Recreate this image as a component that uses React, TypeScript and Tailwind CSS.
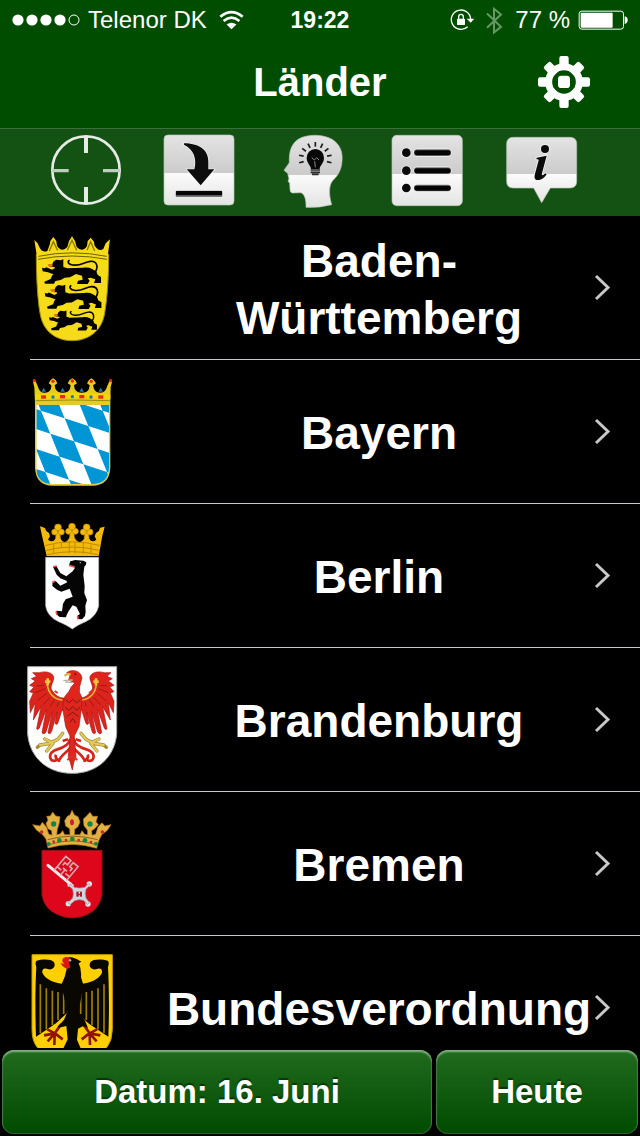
import type { ReactNode } from "react";

const font = "font-['Liberation_Sans',Arial,sans-serif]";

/* ---------- status bar ---------- */

function SignalDots() {
  return (
    <svg viewBox="0 0 68 12" className="h-3 w-[68px]" aria-hidden="true">
      <g fill="#fff">
        <circle cx="6" cy="6" r="5.6" />
        <circle cx="20" cy="6" r="5.6" />
        <circle cx="34" cy="6" r="5.6" />
        <circle cx="48" cy="6" r="5.6" />
      </g>
      <circle cx="62" cy="6" r="5" fill="none" stroke="#fff" strokeWidth="1" />
    </svg>
  );
}

function Wifi() {
  return (
    <svg viewBox="660 30 76 60" className="h-5 w-[25px]" aria-hidden="true">
      <g fill="none" stroke="#fff" strokeWidth="8">
        <path d="M664 50Q698 22 732 50" />
        <path d="M674 63Q698 43 722 63" />
      </g>
      <path d="M683 74Q698 63 713 74L698 88Z" fill="#fff" />
    </svg>
  );
}

function RotationLock() {
  return (
    <svg viewBox="390 28 75 66" className="h-[22px] w-[25px]" aria-hidden="true">
      <path d="M443 81A29 29 0 1 1 452 60" fill="none" stroke="#fff" strokeWidth="4" />
      <path d="M440 57H463L452 69Z" fill="#fff" />
      <rect x="411" y="57" width="24" height="19" rx="2" fill="#fff" />
      <path d="M416 58V51A7 7 0 0 1 430 51V58" fill="none" stroke="#fff" strokeWidth="4" />
    </svg>
  );
}

function Bluetooth() {
  return (
    <svg viewBox="494 18 54 86" className="h-[29px] w-[18px]" aria-hidden="true">
      <path d="M500 40L542 80L521 97V26L542 43L500 83" fill="none" stroke="#669866" strokeWidth="6" />
    </svg>
  );
}

function Battery() {
  return (
    <svg viewBox="778 31 150 60" className="h-5 w-[50px]" aria-hidden="true">
      <rect x="781.5" y="34.5" width="133" height="54" rx="8" fill="none" stroke="#fff" strokeWidth="3" />
      <rect x="786" y="39" width="96" height="45" rx="3" fill="#fff" />
      <path d="M918 50Q927 52 927 61Q927 70 918 73Z" fill="#fff" />
    </svg>
  );
}

function Gear() {
  const teeth = [0, 45, 90, 135, 180, 225, 270, 315];
  return (
    <svg viewBox="651 166 162 162" className="size-[54px]" aria-hidden="true">
      <g fill="#fff">
        {teeth.map((angle) => (
          <rect
            key={angle}
            x="718"
            y={angle % 90 === 0 ? 169 : 172}
            width="28"
            height="40"
            rx="6"
            transform={`rotate(${angle} 732 247)`}
          />
        ))}
      </g>
      <circle cx="732" cy="247" r="46" fill="none" stroke="#fff" strokeWidth="21" />
      <rect x="714" y="228" width="36" height="37" rx="10" fill="#fff" />
    </svg>
  );
}

/* ---------- tool bar ---------- */

function Sheen({ id, top, split, bottom }: { id: string; top: number; split: number; bottom: number }) {
  const at = (split - top) / (bottom - top);
  return (
    <defs>
      <linearGradient id={id} gradientUnits="userSpaceOnUse" x1="0" y1={top} x2="0" y2={bottom}>
        <stop offset="0" stopColor="#e3e4e3" />
        <stop offset={at} stopColor="#cbcbcb" />
        <stop offset={at} stopColor="#fbfbfb" />
        <stop offset="1" stopColor="#e2e4e2" />
      </linearGradient>
    </defs>
  );
}

function Crosshair() {
  return (
    <svg viewBox="48 36 240 240" className="size-20" aria-hidden="true">
      <g fill="none" stroke="#e6ebe6">
        <circle cx="168" cy="150" r="101" strokeWidth="8" />
        <path d="M168 48V99M168 201V252" strokeWidth="12" />
        <path d="M66 152H116M219 152H270" strokeWidth="10" stroke="#bfcdbf" />
      </g>
    </svg>
  );
}

function Download() {
  return (
    <svg viewBox="390 36 240 240" className="size-20" aria-hidden="true">
      <Sheen id="sheen-download" top={44} split={160} bottom={256} />
      <rect x="402" y="45" width="210" height="210" rx="12" fill="url(#sheen-download)" stroke="#b9c6b9" strokeWidth="2" />
      <path
        d="M462 70C505 70 535 88 535 125V148H553L512 196L470 148H493C501 118 492 88 462 74Z"
        fill="#0c0c0c"
        stroke="#f3f3f3"
        strokeWidth="4"
        paintOrder="stroke"
      />
      <rect x="437" y="212" width="140" height="19" rx="3" fill="#777" />
      <rect x="438" y="213" width="138" height="13" rx="2" fill="#060606" />
    </svg>
  );
}

function Idea() {
  const rays = [-104, -78, -52, -26, 0, 26, 52, 78, 104];
  return (
    <svg viewBox="732 36 240 240" className="size-20" aria-hidden="true">
      <Sheen id="sheen-idea" top={44} split={164} bottom={262} />
      <path
        d="M828 262C829 240 824 221 812 218L788 219Q779 218 780 206L779 190L774 183L777 177L773 160L762 151L778 128C776 92 786 70 806 57C832 42 878 42 906 58C930 73 939 96 936 124C934 150 924 167 909 181C896 194 896 224 905 254Q868 264 828 262Z"
        fill="url(#sheen-idea)"
        stroke="#b9c6b9"
        strokeWidth="2"
      />
      <g stroke="#1c1c1c" strokeWidth="5">
        {rays.map((angle) => (
          <path key={angle} d="M856 66V80" transform={`rotate(${angle} 856 116)`} />
        ))}
      </g>
      <path d="M843 147C843 136 830 130 830 113A26 26 0 0 1 882 113C882 130 869 136 869 147Z" fill="#080808" />
      <path d="M845 113L853 120L860 113L867 120M854 124L856 142" fill="none" stroke="#888" strokeWidth="3" />
      <path d="M842 150H870M842 157H870M846 163H866" stroke="#2c2c2c" strokeWidth="5" />
    </svg>
  );
}

function List() {
  return (
    <svg viewBox="84 36 240 240" className="size-20" aria-hidden="true">
      <Sheen id="sheen-list" top={44} split={162} bottom={258} />
      <rect x="96" y="46" width="211" height="211" rx="14" fill="url(#sheen-list)" stroke="#b9c6b9" strokeWidth="2" />
      {[98, 152, 204].map((y) => (
        <g key={y}>
          <g stroke="#f4f4f4" fill="#f4f4f4" strokeWidth="5">
            <circle cx="139" cy={y} r="13" />
            <rect x="163" y={y - 10} width="109" height="20" rx="9" />
          </g>
          <circle cx="139" cy={y} r="13" fill="#0a0a0a" />
          <rect x="162" y={y - 10} width="111" height="20" rx="9" fill="#777" />
          <rect x="163" y={y - 7} width="109" height="15" rx="7" fill="#050505" />
        </g>
      ))}
    </svg>
  );
}

function Info() {
  return (
    <svg viewBox="426 36 240 240" className="size-20" aria-hidden="true">
      <Sheen id="sheen-info" top={50} split={162} bottom={248} />
      <path
        d="M460 52H630Q650 52 650 72V184Q650 204 630 204H571L545 248L521 204H460Q440 204 440 184V72Q440 52 460 52Z"
        fill="url(#sheen-info)"
        stroke="#b9c6b9"
        strokeWidth="2"
      />
      <g fill="#0a0a0a" stroke="#f4f4f4" strokeWidth="5" paintOrder="stroke">
        <circle cx="555" cy="87" r="12" />
        <path d="M530 113L560 107L546 160C544 168 549 167 556 160L560 163C550 178 540 181 532 180C524 179 522 173 525 161L536 121Q537 117 529 118Z" />
      </g>
    </svg>
  );
}

/* ---------- coats of arms ---------- */

function Arms({ top, children }: { top: number; children: ReactNode }) {
  return (
    <svg viewBox={`0 ${-top} 330 429`} className="h-[143px] w-[110px] shrink-0" aria-hidden="true">
      {children}
    </svg>
  );
}

function Lion() {
  return (
    <g>
      <path
        d="M100 110L108 104L122 106L130 103V126L142 130L190 128C207 125 222 132 230 142L233 150L243 156V174H222L226 163L212 158L203 160L209 167L203 177H171L174 167L188 164L186 152L168 147L150 157L134 158L122 165L106 168L102 176L75 176L73 170L92 162L96 152L100 148L84 142L68 139L66 128L74 130L79 127L96 134L104 130L104 126L90 125L84 119L97 117Z"
        fill="#000"
      />
      <path d="M225 142C237 125 230 107 211 109C192 111 182 124 158 120C144 118 141 109 149 106" fill="none" stroke="#000" strokeWidth="5" />
      <path d="M83 118L98 117L97 125L86 125Z" fill="#f07a10" />
    </g>
  );
}

function BadenArms() {
  return (
    <Arms top={27}>
      <path d="M49 88Q156 72 266 88C266 170 260 230 254 264C246 318 205 347 156 347C107 347 68 318 60 264C54 230 49 170 49 88Z" fill="#f5db18" stroke="#a38f08" strokeWidth="3" />
      <path
        d="M52 102L43 45L53 55L58 66Q66 84 82 78L90 56L91 48L100 36L109 48L111 62Q125 84 142 66L147 48L156 34L165 48L170 66Q188 84 201 63L203 48L212 38L222 50L223 60Q235 82 250 72L257 55L270 43L262 102Q156 72 52 102Z"
        fill="#f5db18"
      />
      <path d="M55 94Q156 73 260 94M54 103Q156 83 261 103" fill="none" stroke="#6f600a" strokeWidth="3" />
      <path d="M88 78L100 50L113 76M142 76L156 46L170 76M201 76L212 50L224 78" fill="none" stroke="#8c780c" strokeWidth="4" />
      <Lion />
      <g transform="translate(11 77) scale(.96 .99)"><Lion /></g>
      <g transform="translate(34 173) scale(.81)"><Lion /></g>
    </Arms>
  );
}

/* Blue fields of the Bavarian lozenge pattern: every second cell of a slanted lattice. */
const lozenges = [-3, -2, -1, 0, 1, 2].flatMap((i) =>
  [-3, -2, -1, 0, 1, 2, 3, 4]
    .filter((j) => (i + j) % 2 === 0)
    .map((j) => `M${134 + 71 * i + 28 * j} ${145 + 23 * i + 69 * j}l71 23l28 69l-71 -23z`),
);

function BayernArms() {
  return (
    <Arms top={30}>
      <defs>
        <clipPath id="bavaria">
          <path d="M49 105H267V292Q267 342 216 342H98Q49 342 49 292Z" />
        </clipPath>
      </defs>
      <path d="M45 98H271V294Q268 347 216 347H98Q48 347 45 294Z" fill="#e0cb3a" />
      <g clipPath="url(#bavaria)">
        <rect x="45" y="100" width="230" height="250" fill="#fff" />
        <path d={lozenges.join("")} fill="#0095d5" />
      </g>
      <path d="M45 99L43 52L39 36L47 34L54 50Q58 68 74 68Q88 68 93 56L94 46L86 40L92 30L99 25L107 30L112 40L104 46L106 56Q112 68 128 68Q146 68 150 56L152 46L143 40L149 30L157 25L165 30L171 40L162 46L164 56Q170 68 185 68Q203 68 207 56L209 46L201 40L207 30L214 25L221 30L228 40L219 46L222 56Q226 68 242 68Q257 66 261 50L268 34L276 36L272 52L271 99Z" fill="#e6cd1b" />
      <path d="M45 74Q157 62 271 74V88Q157 80 45 88Z" fill="#f3d70a" />
      <path d="M47 92Q157 88 269 92" fill="none" stroke="#a08a14" strokeWidth="3" />
      <g fill="#e52a17">
        <rect x="63" y="76" width="15" height="10" /><rect x="120" y="75" width="15" height="10" />
        <rect x="178" y="75" width="15" height="10" /><rect x="235" y="76" width="15" height="10" />
        <circle cx="43" cy="32" r="5" /><circle cx="99" cy="34" r="5" /><circle cx="157" cy="33" r="5" /><circle cx="214" cy="34" r="5" /><circle cx="272" cy="32" r="5" />
      </g>
      <g fill="#1779b5">
        <circle cx="99" cy="81" r="5" /><circle cx="157" cy="80" r="5" /><circle cx="213" cy="81" r="5" />
        <path d="M64 65L71 53L78 65ZM121 65L128 53L135 65ZM178 65L185 53L192 65ZM235 65L242 53L249 65Z" />
      </g>
    </Arms>
  );
}

function Trefoil({ x, y, size = 1 }: { x: number; y: number; size?: number }) {
  return (
    <g transform={`translate(${x} ${y}) scale(${size})`} fill="#f4b90b" stroke="#c08b05" strokeWidth="2">
      <path d="M-5 0L-8 30H8L5 0Z" />
      <circle cx="-10" cy="3" r="9" />
      <circle cx="10" cy="3" r="9" />
      <circle cx="0" cy="-11" r="10" />
    </g>
  );
}

function BerlinArms() {
  return (
    <Arms top={33}>
      <path d="M77 127H236V273Q229 305 197 320Q170 331 157 342Q143 331 116 320Q82 305 77 273Z" fill="#fff" stroke="#bbb" strokeWidth="2" />
      <Trefoil x={114} y={48} />
      <Trefoil x={156} y={46} />
      <Trefoil x={200} y={48} />
      <path d="M80 123L66 62L60 34L75 39L78 47L87 54L90 64L84 74Q98 85 106 72H122Q134 92 147 70H165Q178 92 192 72H208Q216 85 229 74L224 64L228 54L237 47L240 38L254 35L247 62L236 123Z" fill="#f4b90b" />
      <path d="M73 92Q157 69 242 92M78 106Q157 86 238 106M82 119Q157 101 234 119M101 87V115M124 81V98M148 80V115M165 80V115M190 83V115M213 89V117" fill="none" stroke="#bd8b00" strokeWidth="3" />
      <path
        d="M151 139L166 135L190 137L199 142L198 149L193 155L190 179L194 213L193 235L201 255L196 272L197 291L195 303L186 313L172 312L172 302L180 297L169 275L158 271L146 288L140 300L138 307L119 306L108 297L109 287L126 289L129 266L137 253L158 245L149 221L124 230L111 224L97 213L98 199L107 198L121 212L142 202L139 197L121 190L110 179L99 155L109 153L121 174L139 184L158 169L165 158L147 151Z"
        fill="#050505"
      />
      <path d="M147 151L164 156M101 155L110 153M98 202L106 198M108 289L111 299M173 303L174 313" fill="none" stroke="#ed5546" strokeWidth="5" />
      <circle cx="181" cy="143" r="2" fill="#ccc" />
    </Arms>
  );
}

function RedWing() {
  return (
    <g>
      <path
        d="M136 114C118 116 104 104 95 90C88 78 104 62 101 50C97 38 78 32 58 38L38 38L50 49L34 56L46 63L29 76L42 81L29 95L40 99L29 124L31 158L46 128L40 180L63 140L50 206Q54 212 58 204L79 148L66 218Q72 226 78 216L97 154L84 218Q90 226 95 214L111 156L105 190Q110 198 114 188L126 150L137 158Z"
        fill="#dc231c"
        stroke="#a51814"
        strokeWidth="2"
      />
      <path d="M82 72C84 100 102 118 127 120" fill="none" stroke="#e0b838" strokeWidth="5" />
      <path d="M75 65H91M83 55V76" stroke="#f3c440" strokeWidth="8" />
      <path d="M50 78L72 76M46 98L75 86M52 122L80 100M70 134L90 112M90 140L102 120M112 140L116 126" stroke="#9c1a16" strokeWidth="3" />
      <path d="M128 220L113 238L95 247L74 237M97 249L60 255M99 250L80 273M60 255L52 262" fill="none" stroke="#a58c34" strokeWidth="10" strokeLinecap="round" />
      <path d="M128 220L113 238L95 247L74 237M97 249L60 255M99 250L80 273" fill="none" stroke="#e5ca5a" strokeWidth="6" strokeLinecap="round" />
      <path d="M150 238C146 258 128 264 112 268C90 274 86 290 94 300Q104 306 112 298Q104 292 108 284M152 262C138 280 118 288 116 306M144 238L128 243" fill="none" stroke="#d7251c" strokeWidth="8" />
    </g>
  );
}

function BrandenburgArms() {
  return (
    <Arms top={36}>
      <path d="M23 20H290V222C284 291 232 340 157 340C80 340 29 291 23 222Z" fill="#fff" stroke="#aaa" strokeWidth="3" />
      <RedWing />
      <g transform="matrix(-1 0 0 1 311 0)"><RedWing /></g>
      <path d="M164 70L146 60L150 46L140 38Q150 30 163 32Q182 34 186 54L179 80L178 96L186 113L184 148L177 200L163 228L165 252L168 290L161 308L157 330L151 308L145 290L150 228L137 200L128 145L133 112L147 94L154 80Z" fill="#df261c" stroke="#a81813" strokeWidth="2" />
      <path d="M160 68L136 66M158 60L130 62" stroke="#b9b4a2" strokeWidth="4" />
      <path d="M134 48Q142 38 152 44" stroke="#d8b23e" strokeWidth="7" fill="none" />
      <path d="M136 119L148 128L158 118L170 128L181 119M135 141L147 152L158 139L171 151L180 140M140 170L158 157L176 170M150 188L158 175L167 189" fill="none" stroke="#7d1714" strokeWidth="3" />
      <circle cx="166" cy="43" r="3" fill="#6e0c0b" />
      <path d="M104 93L113 99M207 99L218 91M142 300L154 290L161 290L172 300" stroke="#dd3029" strokeWidth="6" fill="none" />
    </Arms>
  );
}

function BremenArms() {
  return (
    <Arms top={24}>
      <path d="M66 151H246V285Q239 325 205 342Q157 366 109 342Q72 325 66 285Z" fill="#dd061b" stroke="#8b1712" strokeWidth="3" />
      <path d="M84 144L78 118Q70 102 50 91L38 74L60 78L67 67L80 82L86 102L96 106L95 92L84 86L78 71L84 60L80 49L91 48L98 36L107 48L120 50L118 68L112 88L110 104L120 102L128 92L134 104H150L149 86L137 78L134 62L142 49L150 45L156 31L163 45L174 50L180 66L174 80L164 88L163 104H180L186 92L194 103L203 104L202 90L192 77L190 57L199 49L210 37L218 49L233 49L228 65L235 74L224 86L215 92L216 106L227 103L234 81L246 68L254 78L273 74L262 91L245 104L236 122L230 145Q157 122 84 144Z" fill="#e3b044" stroke="#b97b1c" strokeWidth="2" />
      <path d="M87 134Q157 111 229 134M83 119Q157 98 233 119" fill="none" stroke="#8c6426" strokeWidth="3" />
      <g fill="#158641"><circle cx="101" cy="72" r="8" /><circle cx="210" cy="72" r="8" /><circle cx="86" cy="132" r="6" /><circle cx="118" cy="121" r="7" /><circle cx="157" cy="117" r="7" /><circle cx="195" cy="121" r="7" /><circle cx="228" cy="131" r="6" /></g>
      <g fill="#ce2034"><circle cx="65" cy="96" r="5" /><ellipse cx="156" cy="67" rx="6" ry="9" /><circle cx="247" cy="96" r="5" /><circle cx="101" cy="125" r="4" /><circle cx="138" cy="120" r="4" /><circle cx="176" cy="120" r="4" /><circle cx="213" cy="126" r="4" /></g>
      <path d="M84 196L157 257" stroke="#eee" strokeWidth="9" strokeLinecap="round" />
      <g transform="translate(121 226) rotate(40)" fill="none" stroke="#d9aab0" strokeWidth="5">
        <path d="M-24 0V-54H-4V-38H-14V-28M0 0V-22M24 0V-54H5V-38H14V-28M-24 -14H-8M24 -14H8M0 -22H-8M0 -22H8" />
      </g>
      <g fill="#e4e5ea">
        <circle cx="149" cy="254" r="7" /><circle cx="208" cy="252" r="8" /><circle cx="145" cy="311" r="8" /><circle cx="204" cy="312" r="8" />
      </g>
      <path d="M151 252L163 262Q178 266 194 262L206 250L210 256L198 268Q194 282 198 294L208 308L202 314L192 302Q178 296 164 302L150 314L144 308L158 294Q162 282 158 268L147 258Z" fill="#d3d5dc" stroke="#8f9098" strokeWidth="2" />
      <rect x="169" y="275" width="17" height="15" fill="#a61c29" />
      <path d="M178 275V281M178 286V290" stroke="#ddd" strokeWidth="4" />
    </Arms>
  );
}

function BlackWing() {
  return (
    <g>
      <path d="M137 132C104 130 75 118 67 98C66 82 76 84 86 88C100 90 108 78 102 67C94 56 66 58 50 62Q44 66 49 82C46 130 45 220 48 290L75 272L108 250L142 218Z" fill="#080701" />
      <path d="M61 133V279M79 145V268M97 152V255M114 156V240M131 158V222" stroke="#9d7f06" strokeWidth="5" />
      <path d="M124 252L104 280L82 268M104 280L72 286M104 280L83 304M104 280L103 315M105 280L128 298" fill="none" stroke="#8f120b" strokeWidth="8" />
    </g>
  );
}

function BundArms() {
  return (
    <Arms top={12}>
      <path d="M36 44H277V268Q276 335 218 344H98Q36 338 36 268Z" fill="#ffcf00" stroke="#c99d00" strokeWidth="3" />
      <BlackWing />
      <g transform="matrix(-1 0 0 1 313 0)"><BlackWing /></g>
      <path d="M133 62Q139 50 155 52L170 57L184 65L176 70Q185 87 183 112L190 134L176 216L194 240L204 264L190 258L174 266L171 299L182 325H130L143 298L139 258L123 262L112 262L132 239L142 216L124 134L134 111L140 87Z" fill="#080701" />
      <path d="M150 55Q136 47 128 56Q124 66 134 71L121 70Q128 82 142 87L152 82Q144 71 150 55Z" fill="#da1712" />
      <circle cx="150" cy="61" r="4" fill="#a7a7a7" />
    </Arms>
  );
}

/* ---------- screen ---------- */

const tools = [
  { label: "Standort", icon: <Crosshair /> },
  { label: "Laden", icon: <Download /> },
  { label: "Wissen", icon: <Idea /> },
  { label: "Liste", icon: <List /> },
  { label: "Info", icon: <Info /> },
];

const states = [
  { name: "Baden-Württemberg", arms: <BadenArms /> },
  { name: "Bayern", arms: <BayernArms /> },
  { name: "Berlin", arms: <BerlinArms /> },
  { name: "Brandenburg", arms: <BrandenburgArms /> },
  { name: "Bremen", arms: <BremenArms /> },
  { name: "Bundesverordnung", arms: <BundArms /> },
];

function GreenButton({ children }: { children: ReactNode }) {
  return (
    <button
      type="button"
      className="h-[84px] rounded-xl bg-linear-to-b from-[#206b1e] to-[#004b00] text-[33px] font-bold text-white inset-shadow-[0_2px_2px_#88b388] ring-1 ring-[#2c602c] ring-inset text-shadow-[0_-2px_1px_#063806]"
    >
      {children}
    </button>
  );
}

export default function App() {
  return (
    <div className={`${font} flex h-screen flex-col bg-black text-white`}>
      <header className="shrink-0 bg-[#004d00]">
        <div className="grid h-10 grid-cols-[1fr_auto_1fr] items-center pr-3 pl-3 text-2xl">
          <div className="flex items-center gap-2">
            <SignalDots />
            <span>Telenor DK</span>
            <span className="pl-1"><Wifi /></span>
          </div>
          <time className="text-[23px] font-bold">19:22</time>
          <div className="flex items-center justify-end gap-2">
            <RotationLock />
            <span className="pl-0.5"><Bluetooth /></span>
            <span className="pl-1">77 %</span>
            <Battery />
          </div>
        </div>
        <div className="grid h-[88px] grid-cols-[1fr_auto_1fr] items-center pb-1">
          <h1 className="col-start-2 text-[40px] font-bold">Länder</h1>
          <button type="button" aria-label="Einstellungen" className="mr-[49px] justify-self-end">
            <Gear />
          </button>
        </div>
      </header>

      <nav className="grid h-[88px] shrink-0 grid-cols-5 border-t border-[#3c703a] bg-[#145214] pr-[41px] pb-0.5 pl-[29px]">
        {tools.map((tool) => (
          <button key={tool.label} type="button" aria-label={tool.label} className="flex items-center justify-center">
            {tool.icon}
          </button>
        ))}
      </nav>

      <ul className="min-h-0 flex-1 overflow-y-auto [scrollbar-width:none]">
        {states.map((state) => (
          <li key={state.name}>
            <button type="button" className="flex h-[143px] w-full items-center pr-7 pl-5">
              {state.arms}
              <span className="ml-9 min-w-0 flex-1 pt-1 text-center text-[46px] leading-[57px] font-bold">{state.name}</span>
              <svg viewBox="0 0 20 30" className="h-[30px] w-5 shrink-0" aria-hidden="true">
                <path d="M4 3L16 14.5L4 26" fill="none" stroke="#c7c7cc" strokeWidth="3" />
              </svg>
            </button>
            <hr className="ml-[30px] border-[#c8c7cc]" />
          </li>
        ))}
      </ul>

      <footer className="grid shrink-0 grid-cols-[430fr_202fr] gap-1 bg-black p-0.5">
        <GreenButton>Datum: 16. Juni</GreenButton>
        <GreenButton>Heute</GreenButton>
      </footer>
    </div>
  );
}
